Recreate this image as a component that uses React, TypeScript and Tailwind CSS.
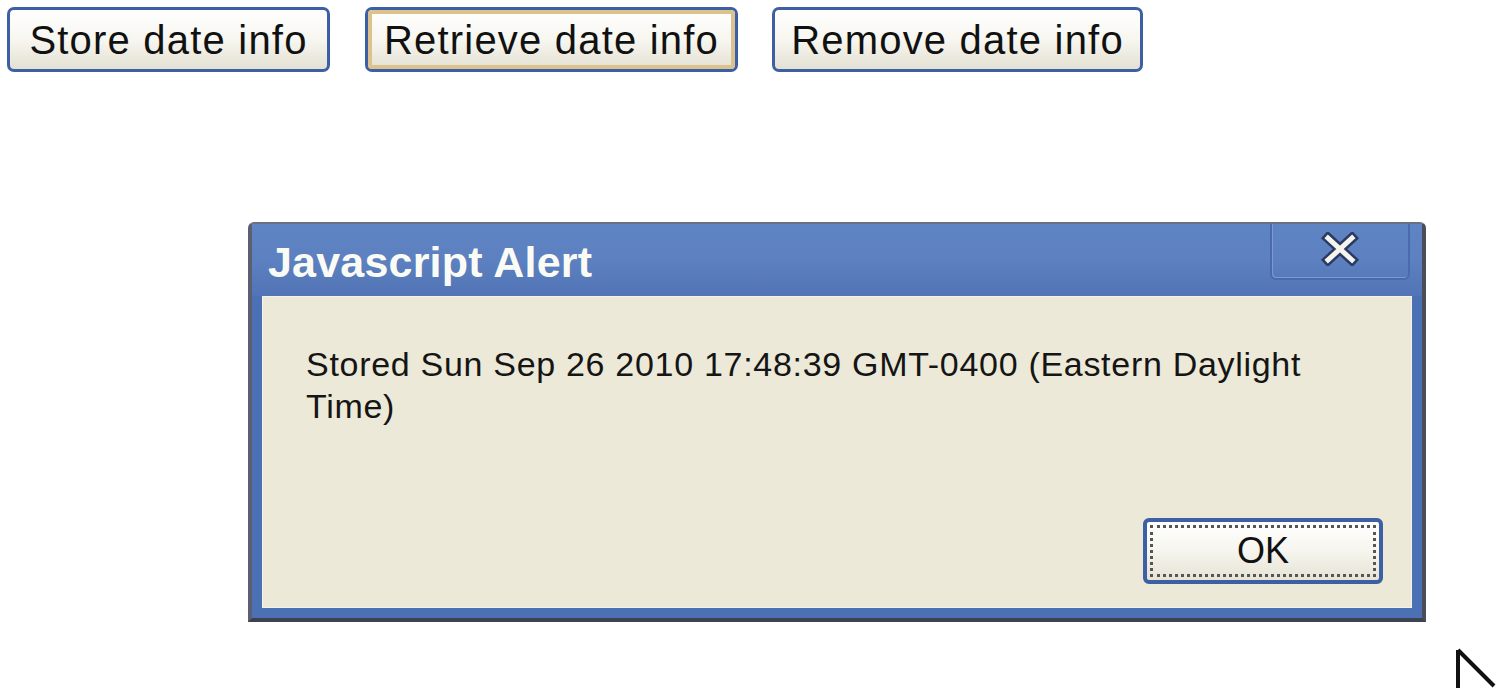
import React from "react";

function XpButton({ label, hover, w }: { label: string; hover?: boolean; w: string }) {
  return (
    <div
      className={`${w} h-[65px] shrink-0 rounded-[7px] border-[3px] border-[#3d5fa3] bg-gradient-to-b from-[#ffffff] via-[#f7f6f0] to-[#e4e1d3] flex`}
    >
      <div
        className={`flex-1 flex items-center justify-center rounded-[4px] ${hover ? "border-[4px] border-[#dcc28c]" : "border-[4px] border-transparent"}`}
      >
        <span className="text-[40px] leading-none text-[#111] tracking-[1.2px]">{label}</span>
      </div>
    </div>
  );
}

export default function App() {
  return (
    <div
      className="relative w-[1500px] h-[692px] bg-white overflow-hidden"
      style={{ fontFamily: '"Liberation Sans", Arial, sans-serif' }}
    >
      <div className="flex pt-[7px] pl-[7px]">
        <XpButton label="Store date info" w="w-[323px]" />
        <div className="w-[35px]" />
        <XpButton label="Retrieve date info" hover w="w-[373px]" />
        <div className="w-[34px]" />
        <XpButton label="Remove date info" w="w-[371px]" />
      </div>

      {/* dialog */}
      <div className="ml-[248px] mt-[150px] w-[1178px] h-[400px] flex flex-col rounded-t-[6px] border-l-[4px] border-t-[2px] border-r-[4px] border-b-[4px] border-l-[#5a6072] border-t-[#6a7080] border-r-[#4a4e5a] border-b-[#3e4250] bg-[#4c70b4]">
        <div className="h-[72px] flex items-center justify-between bg-gradient-to-b from-[#5f84c4] via-[#5c80c0] to-[#5274b6] pl-[16px] pr-[12px]">
          <span className="text-[43px] font-bold text-[#fbfbf5] leading-none mt-[4px] tracking-[0.2px]">Javascript Alert</span>
          <div className="self-start w-[140px] h-[56px] rounded-b-[6px] border-[2px] border-t-0 border-[#4a6aad] flex items-center justify-center shadow-[inset_1px_-1px_0_#7a9ad0]">
            <svg width="40" height="34" viewBox="0 0 40 34" className="-mt-[4px]">
              <path d="M8 6 L32 28 M32 6 L8 28" stroke="#2b3a63" strokeWidth="10" strokeLinecap="square" />
              <path d="M8 6 L32 28 M32 6 L8 28" stroke="#f5f5ee" strokeWidth="5" strokeLinecap="square" />
            </svg>
          </div>
        </div>
        <div className="flex-1 mx-[10px] mb-[10px] border-[1px] border-[#f4f2ea] bg-[#ece9d8] flex flex-col pl-[43px] pr-[28px] pt-[46px] pb-[23px]">
          <p className="text-[34px] leading-[42px] text-[#151515] whitespace-nowrap tracking-[0.7px]">
            Stored Sun Sep 26 2010 17:48:39 GMT-0400 (Eastern Daylight
            <br />
            Time)
          </p>
          <div className="mt-auto flex justify-end">
            <div className="w-[240px] h-[66px] rounded-[6px] border-[4px] border-[#3d5fa3] bg-gradient-to-b from-[#ffffff] via-[#f6f5ee] to-[#e6e3d5] p-[3px] flex">
              <div className="flex-1 border-[3px] border-dotted border-[#555] flex items-center justify-center">
                <span className="text-[36px] leading-none text-[#111]">OK</span>
              </div>
            </div>
          </div>
        </div>
      </div>

      {/* cursor */}
      <svg className="absolute left-[1452px] top-[646px]" width="48" height="46" viewBox="0 0 48 46">
        <path d="M6 4 L6 42 M6 4 L42 40" stroke="#111" strokeWidth="4" fill="none" />
      </svg>
    </div>
  );
}
